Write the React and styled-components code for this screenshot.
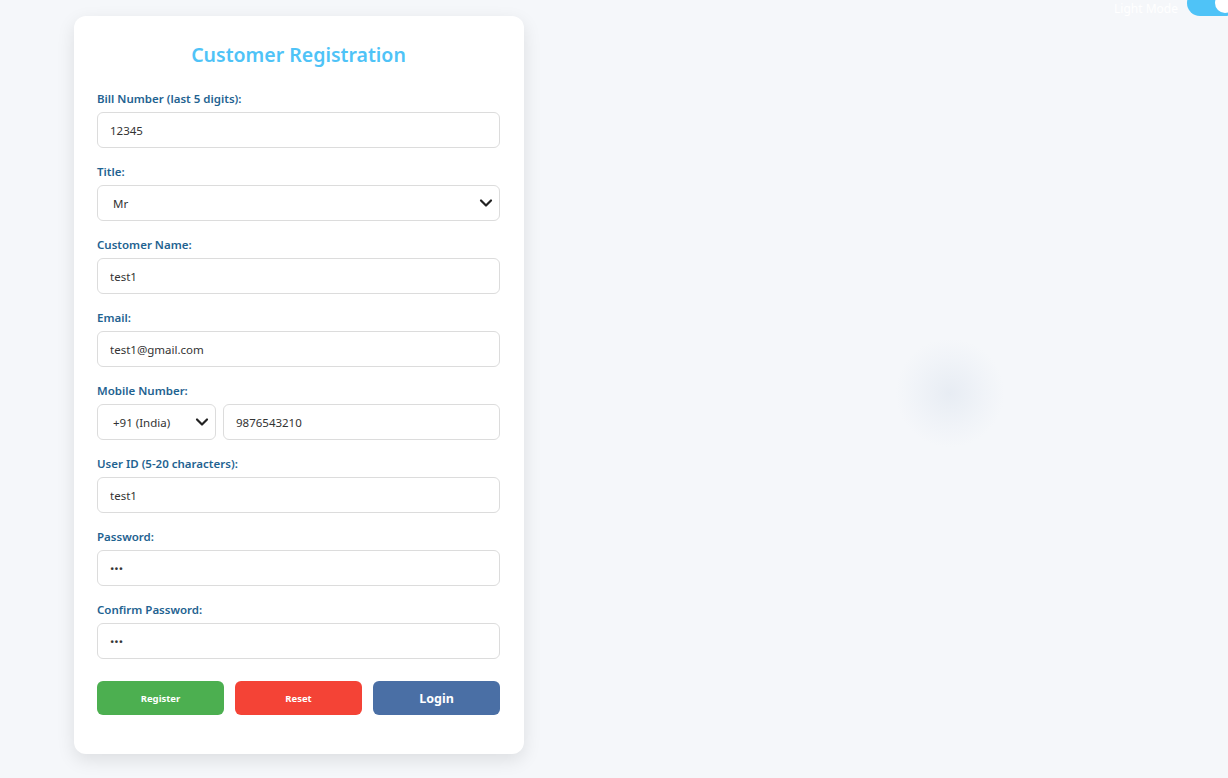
import React from 'react';
import styled, { createGlobalStyle } from 'styled-components';

const colors = {
  page: '#f5f7fa',
  card: '#ffffff',
  title: '#4fc3f7',
  label: '#1f6391',
  border: '#dcdcdc',
  text: '#333333',
  green: '#4caf50',
  red: '#f44336',
  blue: '#4a6fa5',
};

const GlobalStyle = createGlobalStyle`
  html, body {
    margin: 0;
    padding: 0;
    background: ${colors.page};
    font-family: "Noto Sans", "Open Sans", Arial, sans-serif;
  }
  * { box-sizing: border-box; }
`;

const Page = styled.div`
  position: relative;
  min-height: 778px;
  padding: 16px 0 0 74px;
  overflow: hidden;
  background: ${colors.page};
`;

const Glow = styled.div`
  position: absolute;
  left: 895px;
  top: 338px;
  width: 110px;
  height: 110px;
  border-radius: 50%;
  background: radial-gradient(circle, rgba(200, 212, 228, 0.3) 0%, rgba(220, 228, 240, 0.18) 45%, rgba(245, 247, 250, 0) 70%);
`;

const ThemeSwitch = styled.div`
  position: absolute;
  top: -10px;
  right: -10px;
  display: flex;
  align-items: flex-start;
  gap: 9px;
`;

const SwitchLabel = styled.span`
  font-size: 12px;
  line-height: 14px;
  color: #ffffff;
  margin-top: 12px;
`;

const Track = styled.div`
  position: relative;
  width: 51px;
  height: 26px;
  border-radius: 13px;
  background: ${colors.title};
`;

const Knob = styled.div`
  position: absolute;
  right: 3px;
  top: 3px;
  width: 20px;
  height: 20px;
  border-radius: 50%;
  background: #ffffff;
`;

const Card = styled.form`
  width: 450px;
  background: ${colors.card};
  border-radius: 12px;
  padding: 24px 24px 39px 23px;
  box-shadow: 0 6px 18px rgba(0, 0, 0, 0.1);
`;

const Title = styled.h2`
  margin: 0 0 21px;
  text-align: center;
  color: ${colors.title};
  font-size: 19.5px;
  font-weight: 600;
  line-height: 30px;
`;

const Field = styled.div`
  margin-bottom: 16px;
`;

const Label = styled.label`
  display: block;
  font-size: 11.5px;
  font-weight: 600;
  line-height: 16px;
  color: ${colors.label};
  margin-bottom: 5px;
`;

const Input = styled.input`
  display: block;
  width: 100%;
  height: 36px;
  padding: 0 12px;
  border: 1px solid ${colors.border};
  border-radius: 6px;
  font-family: inherit;
  font-size: 11.5px;
  color: ${colors.text};
  background: #fff;
  outline: none;
`;

const SelectWrap = styled.div`
  position: relative;
  width: ${(p) => p.$width || '100%'};
  flex-shrink: 0;
`;

const Select = styled.select`
  display: block;
  width: 100%;
  height: 36px;
  padding: 0 30px 0 15px;
  border: 1px solid ${colors.border};
  border-radius: 6px;
  font-family: inherit;
  font-size: 11.5px;
  color: ${colors.text};
  background: #fff;
  appearance: none;
  outline: none;
`;

const Chevron = styled.svg`
  position: absolute;
  right: 7px;
  top: 12px;
  pointer-events: none;
`;

const Row = styled.div`
  display: flex;
  gap: 7px;
`;

const Buttons = styled.div`
  display: grid;
  grid-template-columns: repeat(3, 1fr);
  gap: 11px;
  margin-top: 22px;
`;

const Button = styled.button`
  height: 34px;
  border: none;
  border-radius: 6px;
  background: ${(p) => p.$bg};
  color: #fff;
  font-family: inherit;
  font-weight: 700;
  font-size: ${(p) => (p.$large ? '12.5px' : '9.5px')};
  cursor: pointer;
`;

const ChevronIcon = () => (
  <Chevron width="14" height="12" viewBox="0 0 14 12">
    <path d="M2 3.5 L7 8.5 L12 3.5" fill="none" stroke="#222" strokeWidth="2.2" strokeLinecap="round" strokeLinejoin="round" />
  </Chevron>
);

const TextField = ({ label, ...rest }) => (
  <Field>
    <Label>{label}</Label>
    <Input readOnly {...rest} />
  </Field>
);

export default function App() {
  return (
    <>
      <GlobalStyle />
      <Page>
        <Glow />
        <ThemeSwitch>
          <SwitchLabel>Light Mode</SwitchLabel>
          <Track>
            <Knob />
          </Track>
        </ThemeSwitch>
        <Card onSubmit={(e) => e.preventDefault()}>
          <Title>Customer Registration</Title>
          <TextField label="Bill Number (last 5 digits):" value="12345" />
          <Field>
            <Label>Title:</Label>
            <SelectWrap>
              <Select defaultValue="Mr">
                <option>Mr</option>
                <option>Mrs</option>
                <option>Ms</option>
              </Select>
              <ChevronIcon />
            </SelectWrap>
          </Field>
          <TextField label="Customer Name:" value="test1" />
          <TextField label="Email:" value="test1@gmail.com" />
          <Field>
            <Label>Mobile Number:</Label>
            <Row>
              <SelectWrap $width="119px">
                <Select defaultValue="+91">
                  <option value="+91">+91 (India)</option>
                  <option value="+1">+1 (USA)</option>
                </Select>
                <ChevronIcon />
              </SelectWrap>
              <Input readOnly value="9876543210" />
            </Row>
          </Field>
          <TextField label="User ID (5-20 characters):" value="test1" />
          <TextField label="Password:" type="password" value="abc" />
          <TextField label="Confirm Password:" type="password" value="abc" />
          <Buttons>
            <Button type="button" $bg={colors.green}>Register</Button>
            <Button type="button" $bg={colors.red}>Reset</Button>
            <Button type="button" $bg={colors.blue} $large>Login</Button>
          </Buttons>
        </Card>
      </Page>
    </>
  );
}
